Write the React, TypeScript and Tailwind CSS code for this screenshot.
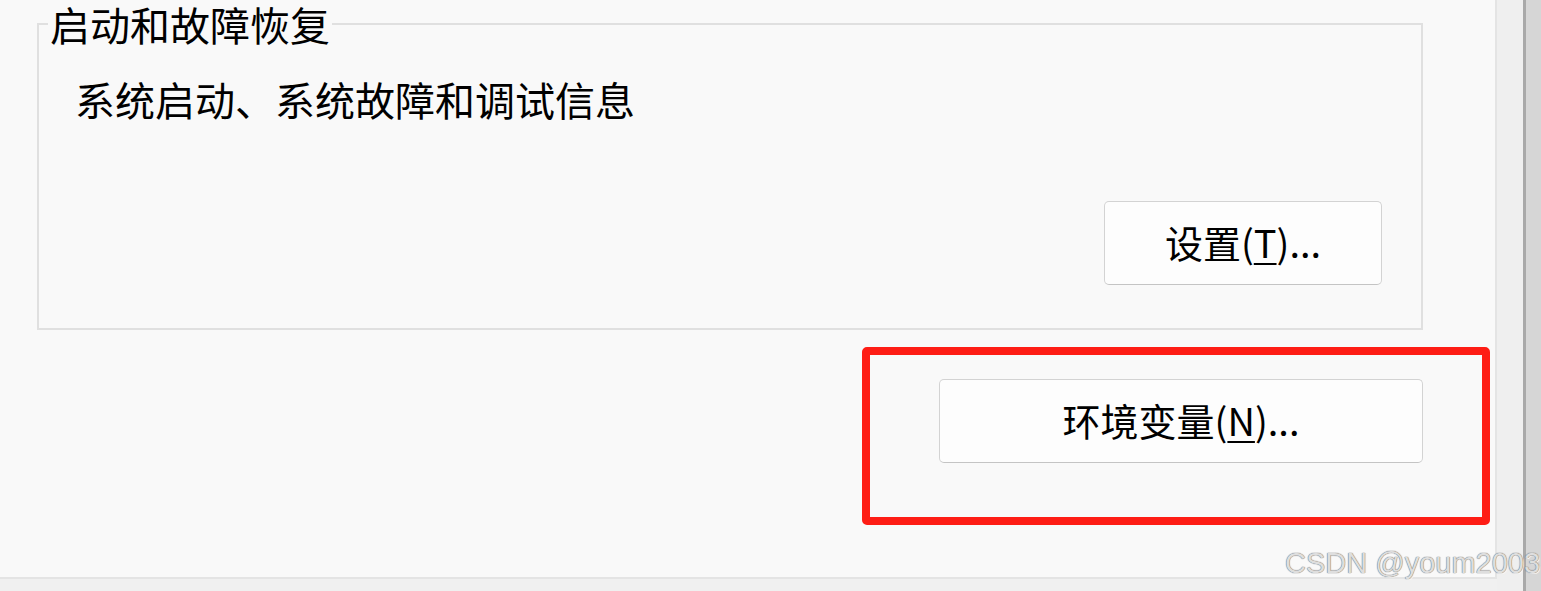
const cjk = "font-['Microsoft_YaHei','Noto_Sans_CJK_SC',sans-serif]";

function Button({ label, accel, rest, className }: { label: string; accel: string; rest: string; className: string }) {
  return (
    <button
      className={`flex items-center justify-center rounded-[5px] border-[1.5px] border-[#d3d3d3] border-b-[#c4c4c4] bg-[#fdfdfd] text-[38px] leading-none text-black ${className}`}
    >
      <span className="-mt-[2px]">
        {label}(<span className="underline decoration-[1.5px] underline-offset-[5px]">{accel}</span>){rest}
      </span>
    </button>
  );
}

export default function App() {
  return (
    <div className={`relative flex h-[591px] w-[1541px] overflow-hidden bg-[#f0f0f0] ${cjk}`}>
      <div className="flex w-[1497px] flex-col">
        <div className="h-[579px] border-r-2 border-b-2 border-[#e4e4e4] bg-[#f9f9f9]">
          <fieldset className="ml-[37px] w-[1386px] border-2 border-[#e0e0e0] pb-[43px]">
            <legend className="ml-[9px] px-[2px] text-[40px] leading-[48px] text-black">启动和故障恢复</legend>
            <p className="mt-[28px] ml-[36px] text-[40px] leading-[46px] text-black">系统启动、系统故障和调试信息</p>
            <div className="mt-[79px] flex justify-end pr-[39px]">
              <Button label="设置" accel="T" rest="..." className="h-[84px] w-[278px]" />
            </div>
          </fieldset>
          <div className="mt-[49px] flex w-[1423px] justify-end">
            <Button label="环境变量" accel="N" rest="..." className="h-[84px] w-[484px]" />
          </div>
        </div>
      </div>
      <div className="w-[26px] bg-[#efefef]" />
      <div className="w-[3px] bg-[#a9a9a9]" />
      <div className="flex-1 bg-[#d6d6d6]" />

      {/* annotation + watermark overlays */}
      <div className="absolute left-[862px] top-[347px] h-[178px] w-[628px] rounded-[5px] border-[8px] border-[#fe1d15]" />
      <div className="absolute left-[1285px] top-[545px] font-['Liberation_Sans',Arial,sans-serif] text-[29px] leading-[36px] text-[#dedede] [text-shadow:0_0_1px_#707070,0_0_1px_#707070,1px_1px_0_#ffffff]">
        CSDN @youm2003
      </div>
    </div>
  );
}
